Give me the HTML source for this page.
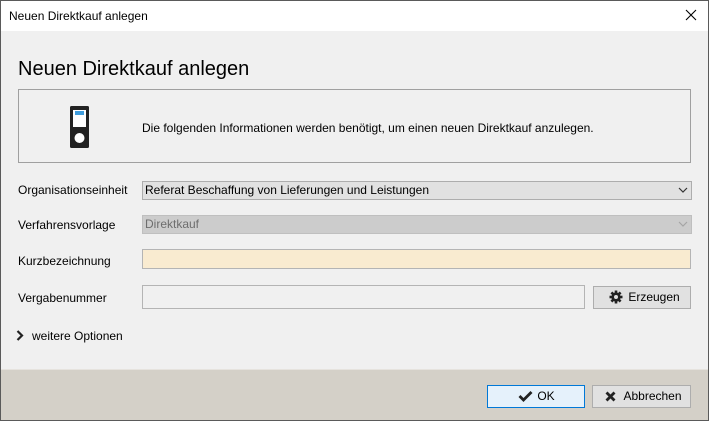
<!DOCTYPE html>
<html><head><meta charset="utf-8"><style>
*{margin:0;padding:0;box-sizing:border-box}
body{width:709px;height:421px;overflow:hidden;background:#f0f0f0;font-family:"Liberation Sans",sans-serif;font-size:12px;color:#000;position:relative}
.a{position:absolute}
.win{left:0;top:0;width:709px;height:421px;border:1px solid #5a5a5a;border-top-color:#5a5a5a}
.title{left:1px;top:1px;width:707px;height:30px;background:#fff}
.lbl{left:18px;font-size:12px}
.box{border:1px solid #adadad}
.btn{border:1px solid #adadad;background:#e1e1e1;font-size:12px;text-align:center;line-height:20px}
</style></head><body>
<div class="a title"></div>
<div class="a" style="left:9px;top:9px;font-size:12px">Neuen Direktkauf anlegen</div>
<svg class="a" style="left:685px;top:9px" width="12" height="12"><path d="M1 1L11 11M11 1L1 11" stroke="#000" stroke-width="1.1"/></svg>
<div class="a" style="left:18px;top:58px;font-size:20px;color:#000">Neuen Direktkauf anlegen</div>
<div class="a" style="left:18px;top:89px;width:673px;height:74px;border:1px solid #a0a0a0"></div>
<svg class="a" style="left:70px;top:106px" width="20" height="43"><rect x="0" y="0" width="19" height="42" rx="1.5" fill="#222"/><rect x="3" y="4" width="13" height="17" fill="#fff"/><rect x="5" y="5" width="9" height="4" fill="#3f9ddd"/><circle cx="9.5" cy="32" r="5" fill="#fff"/></svg>
<div class="a" style="left:142px;top:121px">Die folgenden Informationen werden benötigt, um einen neuen Direktkauf anzulegen.</div>

<div class="a lbl" style="top:183px">Organisationseinheit</div>
<div class="a box" style="left:142px;top:181px;width:550px;height:19px;background:#e1e1e1"></div>
<div class="a" style="left:145px;top:183px">Referat Beschaffung von Lieferungen und Leistungen</div>
<svg class="a" style="left:678px;top:187px" width="10" height="7"><path d="M1 1L5 5L9 1" stroke="#333" fill="none" stroke-width="1.2"/></svg>

<div class="a lbl" style="top:218px">Verfahrensvorlage</div>
<div class="a" style="left:142px;top:215px;width:550px;height:19px;background:#cccccc;border:1px solid #bfbfbf"></div>
<div class="a" style="left:145px;top:217px;color:#6d6d6d">Direktkauf</div>
<svg class="a" style="left:678px;top:221px" width="10" height="7"><path d="M1 1L5 5L9 1" stroke="#a5a5a5" fill="none" stroke-width="1.2"/></svg>

<div class="a lbl" style="top:254px">Kurzbezeichnung</div>
<div class="a" style="left:142px;top:249px;width:549px;height:20px;background:#f9ebd0;border:1px solid #b4b4b4"></div>

<div class="a lbl" style="top:291px">Vergabenummer</div>
<div class="a" style="left:142px;top:285px;width:443px;height:24px;background:#f0f0f0;border:1px solid #b4b4b4"></div>
<div class="a btn" style="left:593px;top:286px;width:98px;height:23px;padding-left:24px">Erzeugen</div>
<svg class="a" style="left:609px;top:290px" width="14" height="14" viewBox="0 0 14 14"><g fill="#222"><circle cx="7" cy="7" r="4.6"/><rect x="5.7" y="0.5" width="2.6" height="13"/><rect x="0.5" y="5.7" width="13" height="2.6"/><rect x="5.7" y="0.5" width="2.6" height="13" transform="rotate(45 7 7)"/><rect x="5.7" y="0.5" width="2.6" height="13" transform="rotate(-45 7 7)"/></g><circle cx="7" cy="7" r="2" fill="#e1e1e1"/></svg>

<svg class="a" style="left:16px;top:330px" width="8" height="11"><path d="M1.5 1L6 5.5L1.5 10" stroke="#222" stroke-width="2.2" fill="none"/></svg>
<div class="a" style="left:32px;top:329px">weitere Optionen</div>

<div class="a" style="left:1px;top:369px;width:707px;height:51px;background:#d4d0c8;border-top:1px solid #e6e3de"></div>
<div class="a btn" style="left:487px;top:385px;width:98px;height:23px;background:#e5f1fb;border:1px solid #0078d7;padding-left:20px">OK</div>
<svg class="a" style="left:518px;top:390px" width="15" height="12"><path d="M1.5 6L5.5 10L13.5 2" stroke="#222" stroke-width="2.8" fill="none"/></svg>
<div class="a btn" style="left:592px;top:385px;width:99px;height:23px;padding-left:22px">Abbrechen</div>
<svg class="a" style="left:605px;top:391px" width="11" height="11"><path d="M1.5 1.5L9.5 9.5M9.5 1.5L1.5 9.5" stroke="#222" stroke-width="2.8"/></svg>
<div class="a win"></div>
</body></html>
